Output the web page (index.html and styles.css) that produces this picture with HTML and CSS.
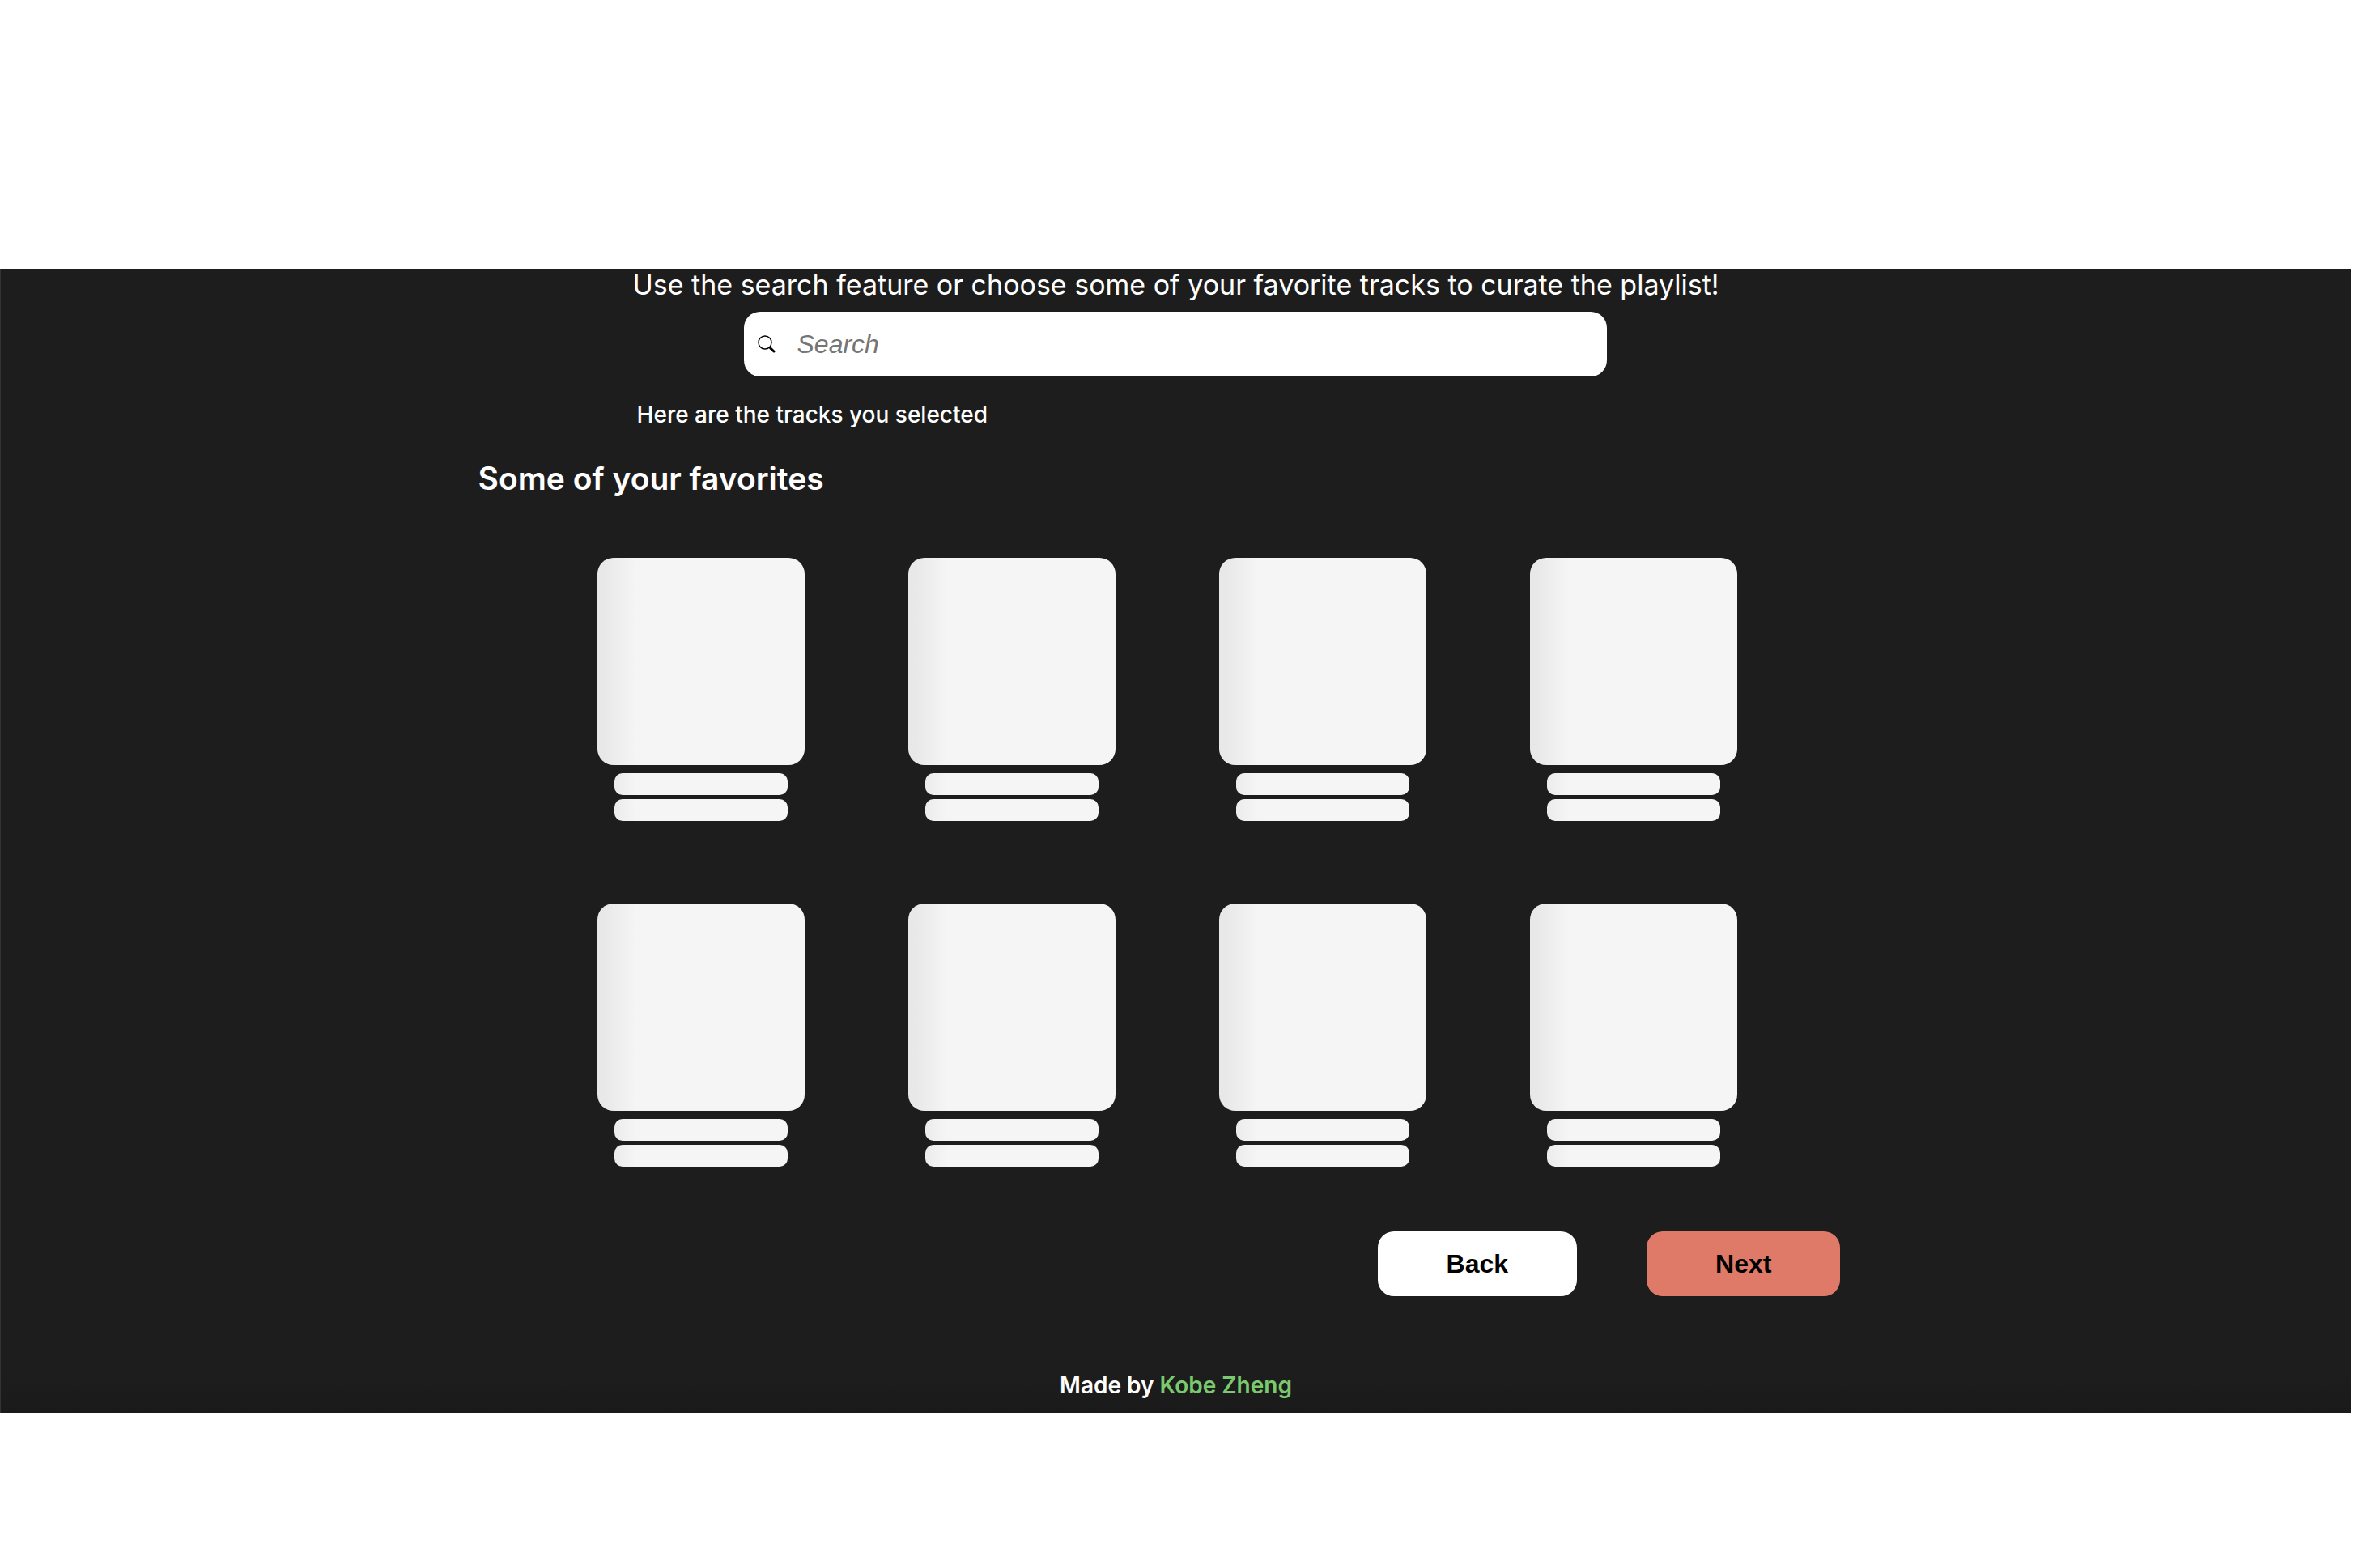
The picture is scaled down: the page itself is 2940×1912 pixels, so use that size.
FILE: index.html
```html
<!DOCTYPE html>
<html lang="en">
<head>
<meta charset="utf-8">
<meta name="viewport" content="width=device-width, initial-scale=1">
<title>Choose your tracks</title>
<link rel="stylesheet" href="styles.css">
</head>
<body>
<div class="page">
  <main class="content">
    <p class="intro">Use the search feature or choose some of your favorite tracks to curate the playlist!</p>
    <form class="search" role="search">
      <label class="search-label" for="track-search" aria-label="Search">
        <svg class="search-icon" viewBox="0 0 22 22" aria-hidden="true">
          <circle cx="9" cy="9" r="8" fill="none" stroke="#000" stroke-width="1.4"/>
          <path d="M14 14.4 L15.4 15.8" stroke="#000" stroke-width="2" fill="none"/>
          <path d="M15.6 15.8 L20 20" stroke="#000" stroke-width="3" stroke-linecap="round" fill="none"/>
        </svg>
      </label>
      <input class="search-input" id="track-search" type="search" placeholder="Search">
    </form>
    <p class="selected">Here are the tracks you selected</p>
    <h2 class="heading">Some of your favorites</h2>
    <ul class="tracks" aria-busy="true">
      <li class="track"><div class="cover"></div><div class="line"></div><div class="line"></div></li>
      <li class="track"><div class="cover"></div><div class="line"></div><div class="line"></div></li>
      <li class="track"><div class="cover"></div><div class="line"></div><div class="line"></div></li>
      <li class="track"><div class="cover"></div><div class="line"></div><div class="line"></div></li>
      <li class="track"><div class="cover"></div><div class="line"></div><div class="line"></div></li>
      <li class="track"><div class="cover"></div><div class="line"></div><div class="line"></div></li>
      <li class="track"><div class="cover"></div><div class="line"></div><div class="line"></div></li>
      <li class="track"><div class="cover"></div><div class="line"></div><div class="line"></div></li>
    </ul>
    <div class="actions">
      <button class="button" type="button">Back</button>
      <button class="button button-next" type="button">Next</button>
    </div>
  </main>
  <footer class="footer">Made by <a class="author" href="#">Kobe Zheng</a></footer>
</div>
</body>
</html>
```
FILE: styles.css
```css
* {
  box-sizing: border-box;
}

body {
  margin: 0;
  padding: 332px 36px 0 0;
  background: #fff;
  color: #fff;
  font-family: Inter, sans-serif;
}

.page {
  border-left: 1px solid #333;
  background: #1d1d1d linear-gradient(to top, #1a1a1a, #1d1d1d 48px);
}

.content {
  display: flex;
  flex-direction: column;
  width: 60%;
  margin: 0 auto;
}

.intro {
  margin: 0;
  padding-top: 2px;
  text-align: center;
  font-size: 34px;
  font-weight: 400;
  line-height: 36px;
  white-space: nowrap;
}

.search {
  display: flex;
  align-items: center;
  align-self: center;
  width: 1066px;
  max-width: 100%;
  height: 80px;
  margin-top: 15px;
  padding-left: 17px;
  border-radius: 20px;
  background: #fff;
}

.search-label {
  display: flex;
}

.search-icon {
  width: 22px;
  height: 22px;
}

.search-input {
  flex: 1;
  height: 80px;
  margin: 0;
  padding: 0 26px;
  border: 0;
  outline: 0;
  background: none;
  color: #000;
  font: italic 32px/40px "Liberation Sans", Arial, sans-serif;
}

.search-input::placeholder {
  color: #757575;
  opacity: 1;
}

.selected {
  margin: 29px 0 0;
  padding-left: 205px;
  font-size: 28px;
  font-weight: 500;
  line-height: 36px;
}

.heading {
  margin: 37px 0 0;
  padding-left: 9px;
  font-size: 39px;
  font-weight: 600;
  line-height: 48px;
}

.tracks {
  display: grid;
  grid-template-columns: repeat(4, 256px);
  gap: 102px 128px;
  justify-content: center;
  margin: 74px 0 0;
  padding: 0 20px 0 0;
  list-style: none;
}

.track {
  display: flex;
  flex-direction: column;
  align-items: center;
}

.cover,
.line {
  background: #f5f5f5 linear-gradient(to right, #e8e8e8 8px, #f5f5f5 48px);
}

.cover {
  width: 256px;
  height: 256px;
  margin-bottom: 10px;
  border-radius: 20px;
}

.line {
  width: 214px;
  height: 27px;
  border-radius: 10px;
  background-image: linear-gradient(to right, #ececec, #f5f5f5 27px);
}

.line + .line {
  margin-top: 5px;
}

.actions {
  display: flex;
  justify-content: flex-end;
  gap: 86px;
  margin-top: 80px;
  padding-right: 50px;
}

.button {
  height: 80px;
  padding: 0 85px;
  border: 0;
  border-radius: 20px;
  background: #fff;
  color: #000;
  font: bold 32px/40px "Liberation Sans", Arial, sans-serif;
}

.button-next {
  background: #e07a68;
}

.footer {
  padding: 92px 0 16px;
  text-align: center;
  font-size: 28px;
  font-weight: 600;
  line-height: 36px;
}

.author {
  color: #7bc96f;
  text-decoration: none;
}
```
